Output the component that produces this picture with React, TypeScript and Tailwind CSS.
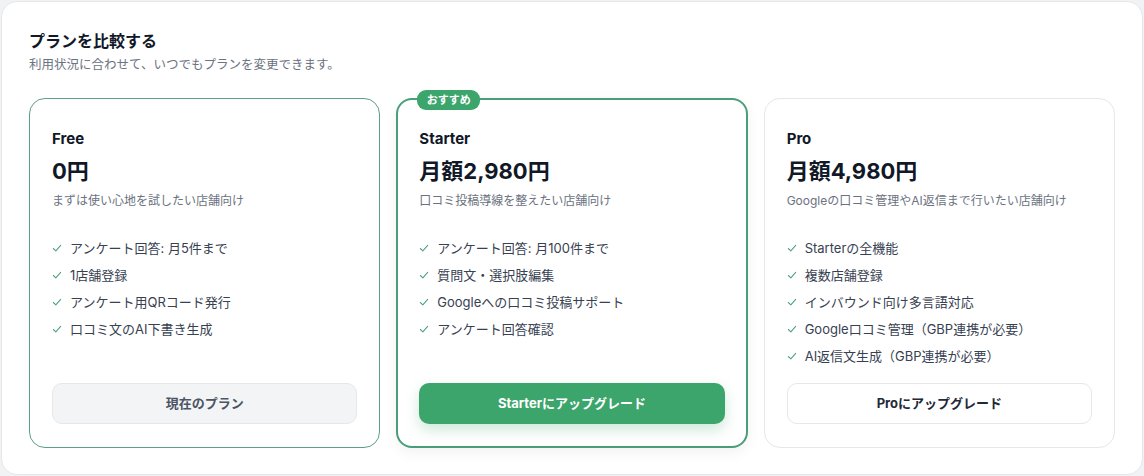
import React from "react";

type Plan = {
  name: string;
  price: string;
  description: string;
  features: string[];
  cta: string;
  variant: "current" | "featured" | "default";
};

const plans: Plan[] = [
  {
    name: "Free",
    price: "0円",
    description: "まずは使い心地を試したい店舗向け",
    features: [
      "アンケート回答: 月5件まで",
      "1店舗登録",
      "アンケート用QRコード発行",
      "口コミ文のAI下書き生成",
    ],
    cta: "現在のプラン",
    variant: "current",
  },
  {
    name: "Starter",
    price: "月額2,980円",
    description: "口コミ投稿導線を整えたい店舗向け",
    features: [
      "アンケート回答: 月100件まで",
      "質問文・選択肢編集",
      "Googleへの口コミ投稿サポート",
      "アンケート回答確認",
    ],
    cta: "Starterにアップグレード",
    variant: "featured",
  },
  {
    name: "Pro",
    price: "月額4,980円",
    description: "Googleの口コミ管理やAI返信まで行いたい店舗向け",
    features: [
      "Starterの全機能",
      "複数店舗登録",
      "インバウンド向け多言語対応",
      "Google口コミ管理（GBP連携が必要）",
      "AI返信文生成（GBP連携が必要）",
    ],
    cta: "Proにアップグレード",
    variant: "default",
  },
];

function Check() {
  return (
    <svg
      width="10"
      height="10"
      viewBox="0 0 12 12"
      fill="none"
      className="shrink-0 text-[#4fa47c]"
    >
      <path
        d="M1.6 6.6 L4.6 9.4 L10.4 2.8"
        stroke="currentColor"
        strokeWidth="1.3"
        strokeLinecap="round"
        strokeLinejoin="round"
      />
    </svg>
  );
}

function PlanCard({ plan }: { plan: Plan }) {
  const cardTone =
    plan.variant === "featured"
      ? "border-2 border-[#4a9d79] pt-[27px] pb-[22px] px-[21px] shadow-[0_4px_14px_rgba(16,24,40,0.06)]"
      : plan.variant === "current"
        ? "border border-[#5d9f83] pt-[28px] pb-[23px] px-[22px]"
        : "border border-[#e5e7eb] pt-[28px] pb-[23px] px-[22px]";

  const buttonTone =
    plan.variant === "featured"
      ? "bg-[#3ca56c] text-white shadow-[0_6px_14px_rgba(60,165,108,0.25)]"
      : plan.variant === "current"
        ? "bg-[#f3f4f6] border border-[#e5e7eb] text-[#4b5563]"
        : "bg-white border border-[#e5e7eb] text-[#1f2937]";

  return (
    <div className={`relative flex flex-col rounded-[16px] bg-white ${cardTone}`}>
      {plan.variant === "featured" && (
        <span className="absolute -top-[10px] left-[19px] flex h-[20px] w-[63px] items-center justify-center rounded-[9px] bg-[#3ca56c] text-[11px] font-bold text-white">
          おすすめ
        </span>
      )}
      <h3 className="text-[15px] leading-6 font-bold text-[#111827]">{plan.name}</h3>
      <p className="mt-1 text-[22px] leading-8 font-bold text-[#111827]">{plan.price}</p>
      <p className="mt-[6px] text-[12px] leading-4 text-[#6b7280]">{plan.description}</p>
      <ul className="mt-[29px] mb-[17px] flex flex-col gap-[7px]">
        {plan.features.map((f) => (
          <li key={f} className="flex items-center gap-[8px] text-[13px] leading-5 text-[#374151]">
            <Check />
            <span>{f}</span>
          </li>
        ))}
      </ul>
      <button
        type="button"
        className={`mt-auto flex h-[41px] w-full items-center justify-center rounded-[10px] text-[13px] font-bold ${buttonTone}`}
      >
        {plan.cta}
      </button>
    </div>
  );
}

export default function App() {
  return (
    <div
      className="min-h-screen bg-[#f1f2f3] p-px"
      style={{ fontFamily: '"Inter", "Noto Sans CJK JP", sans-serif' }}
    >
      <section className="rounded-[16px] border border-[#e5e7eb] bg-white px-[27px] pt-[27px] pb-[26px]">
        <h2 className="text-[16px] leading-6 font-bold text-[#111827]">プランを比較する</h2>
        <p className="mt-1 text-[12.5px] leading-4 text-[#6b7280]">
          利用状況に合わせて、いつでもプランを変更できます。
        </p>
        <div className="mt-[25px] grid grid-cols-3 gap-4">
          {plans.map((p) => (
            <PlanCard key={p.name} plan={p} />
          ))}
        </div>
      </section>
    </div>
  );
}
